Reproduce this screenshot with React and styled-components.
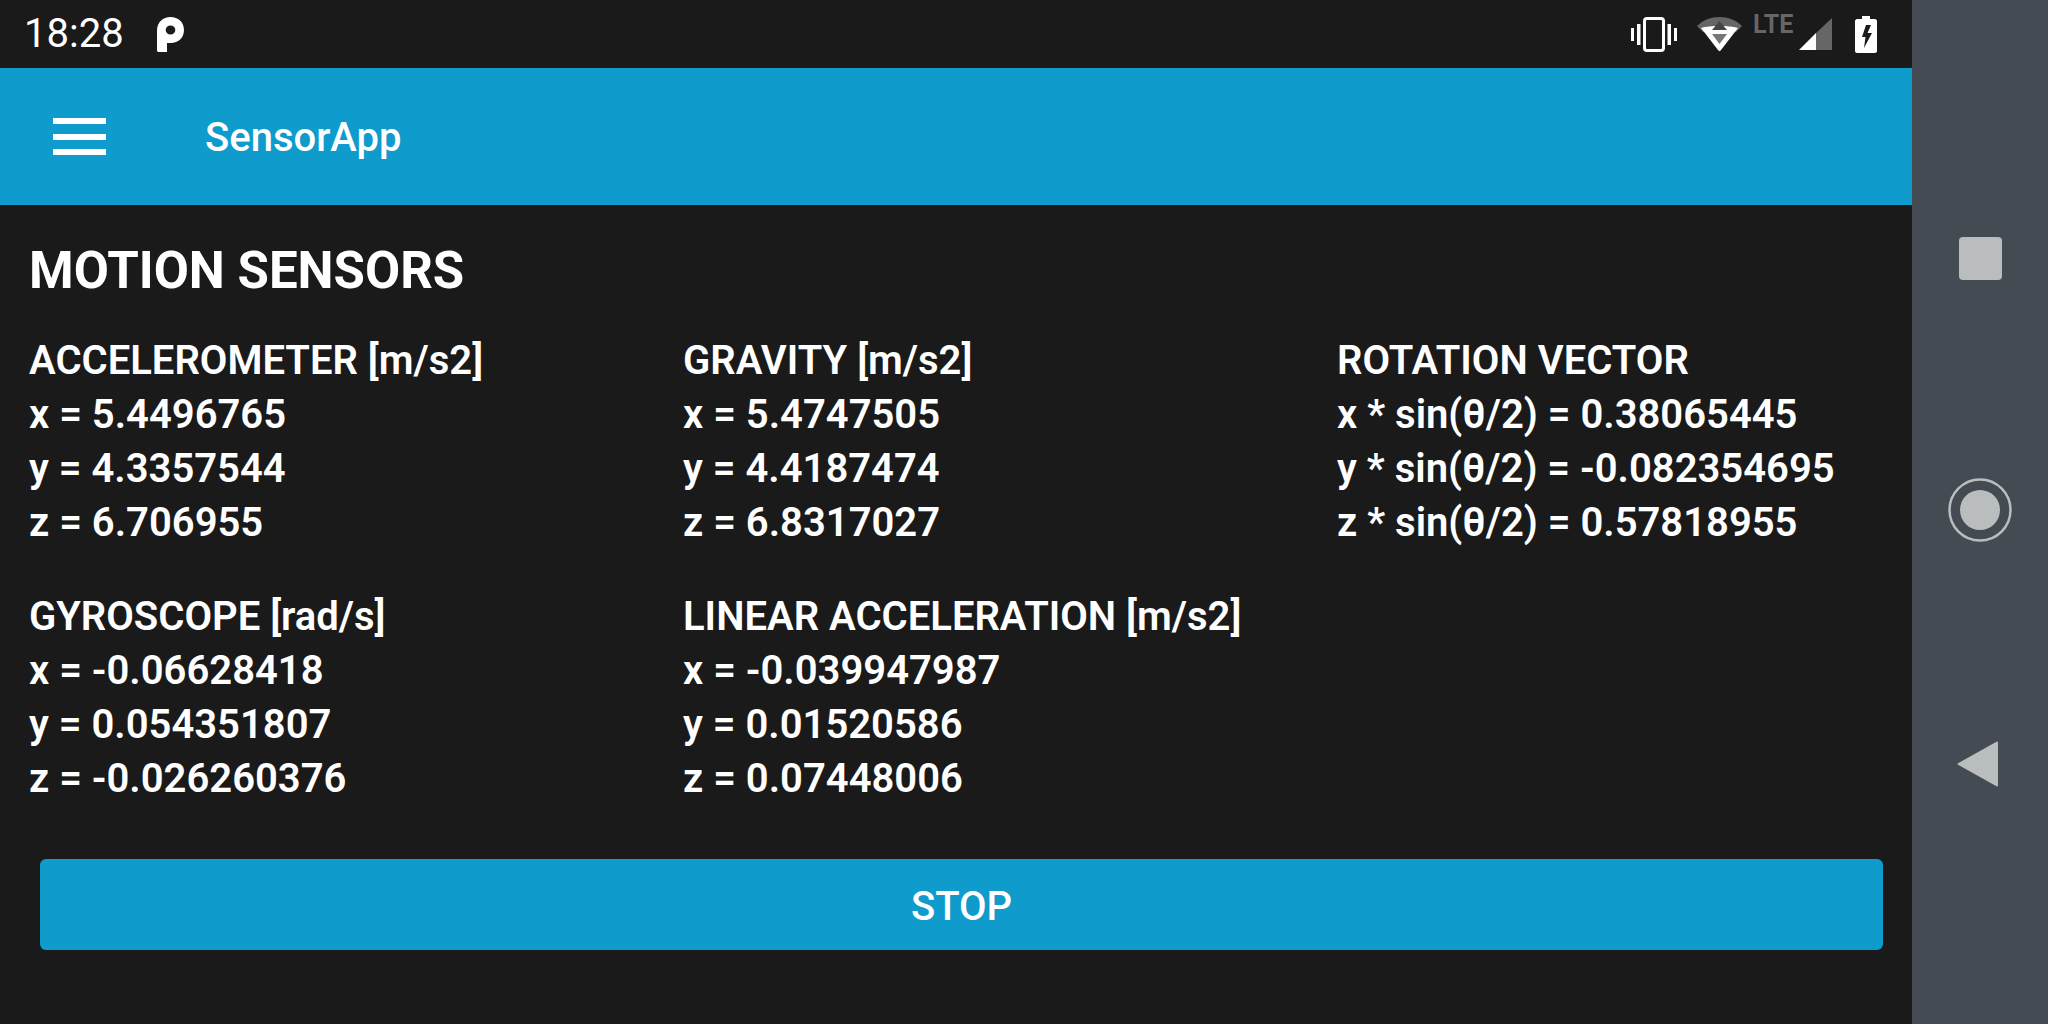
import React from "react";
import styled, { createGlobalStyle } from "styled-components";

const Global = createGlobalStyle`
  html, body { margin: 0; padding: 0; background: #1a1a1a; }
  * { box-sizing: border-box; }
`;

const Screen = styled.div`
  display: flex;
  width: 2048px;
  height: 1024px;
  overflow: hidden;
  font-family: Roboto, "Liberation Sans", sans-serif;
  color: #fff;
`;
const Main = styled.div`
  width: 1912px;
  display: flex;
  flex-direction: column;
  background: #1a1a1a;
`;
const StatusBar = styled.div`
  height: 68px;
  display: flex;
  align-items: center;
  justify-content: space-between;
  padding: 0 35px 0 24px;
`;
const StatusLeft = styled.div`
  display: flex;
  align-items: center;
  gap: 33px;
`;
const Time = styled.span`
  font-size: 40px;
  font-weight: 400;
  line-height: 70px;
`;
const StatusRight = styled.div`
  display: flex;
  align-items: center;
`;
const Lte = styled.span`
  font-size: 25px;
  font-weight: 700;
  color: #666;
  line-height: 20px;
  width: 46px;
  margin-left: 11px;
  margin-top: -18px;
`;
const AppBar = styled.header`
  height: 137px;
  background: #0f9bcb;
  display: flex;
  align-items: center;
  padding-left: 53px;
  gap: 99px;
`;
const Hamburger = styled.div`
  width: 53px;
  height: 37px;
  display: flex;
  flex-direction: column;
  justify-content: space-between;
  span { display: block; height: 6px; background: #fff; }
`;
const AppTitle = styled.h1`
  margin: 2px 0 0;
  font-size: 40px;
  font-weight: 500;
  line-height: 48px;
`;
const Content = styled.main`
  flex: 1;
  padding: 37px 29px 0;
`;
const Title = styled.h2`
  margin: 0 0 34px;
  font-size: 51px;
  font-weight: 700;
  line-height: 58px;
`;
const SensorGrid = styled.div`
  display: grid;
  grid-template-columns: repeat(3, 654px);
  row-gap: 40px;
`;
const Sensor = styled.div`
  font-size: 40px;
  font-weight: 600;
  line-height: 54px;
  white-space: nowrap;
`;
const Line = styled.div``;
const Stop = styled.button`
  display: block;
  width: 1843px;
  height: 91px;
  margin: 53px 0 0 11px;
  padding: 3px 0 0;
  border: 0;
  border-radius: 6px;
  background: #0f9bcb;
  color: #fff;
  font-family: inherit;
  font-size: 40px;
  font-weight: 500;
`;
const NavBar = styled.nav`
  width: 136px;
  background: #444b52;
  display: flex;
  flex-direction: column;
  align-items: center;
  padding: 237px 0 0 0;
`;
const NavSlot = styled.div`
  height: ${(p) => p.$h}px;
  display: flex;
  align-items: flex-start;
  justify-content: center;
  margin-left: ${(p) => p.$shift || 0}px;
`;

const sensors = [
  ["ACCELEROMETER [m/s2]", "x = 5.4496765", "y = 4.3357544", "z = 6.706955"],
  ["GRAVITY [m/s2]", "x = 5.4747505", "y = 4.4187474", "z = 6.8317027"],
  ["ROTATION VECTOR", "x * sin(θ/2) = 0.38065445", "y * sin(θ/2) = -0.082354695", "z * sin(θ/2) = 0.57818955"],
  ["GYROSCOPE [rad/s]", "x = -0.06628418", "y = 0.054351807", "z = -0.026260376"],
  ["LINEAR ACCELERATION [m/s2]", "x = -0.039947987", "y = 0.01520586", "z = 0.07448006"],
];

const PIcon = () => (
  <svg width="27" height="35" viewBox="0 0 27 35">
    <path fillRule="evenodd" fill="#fff" d="M0 14C0 5 6 0 13.5 0S27 5 27 13 21 26 14 26H10V35H1L0 34ZM13.5 8.5A4.8 4.5 0 1 0 13.5 17.5 4.8 4.5 0 1 0 13.5 8.5Z" />
  </svg>
);
const VibrateIcon = () => (
  <svg width="46" height="35" viewBox="0 0 46 35" style={{ marginRight: 20 }}>
    <rect x="13.5" y="1.5" width="19" height="32" rx="2.5" fill="none" stroke="#fff" strokeWidth="3" />
    <rect x="0" y="11" width="3" height="13" fill="#fff" />
    <rect x="6" y="7" width="3.5" height="21" fill="#fff" />
    <rect x="36.5" y="7" width="3.5" height="21" fill="#fff" />
    <rect x="43" y="11" width="3" height="13" fill="#fff" />
  </svg>
);
const WifiIcon = () => (
  <svg width="45" height="35" viewBox="0 0 45 35">
    <path fill="#666" d="M0 9C6 3 14 0 22.500 0S39 3 45 9L39 15H6Z" />
    <path fill="#fff" d="M4 11C9 9.500 15 9 22.500 9S36 9.500 41 11L24 33C23 34.500 22 34.500 21 33Z" />
    <path fill="#444" d="M22.500 4L30 13H15Z" />
    <path fill="#777" d="M15 17H30L22.500 27Z" />
  </svg>
);
const SignalIcon = () => (
  <svg width="33" height="32" viewBox="0 0 33 32">
    <path fill="#666" d="M33 0V32H16V16Z" />
    <path fill="#fff" d="M17 15V32H0Z" />
  </svg>
);
const BatteryIcon = () => (
  <svg width="22" height="37" viewBox="0 0 22 37" style={{ marginLeft: 23 }}>
    <path fill="#fff" fillRule="evenodd" d="M7 0H15V3H20C21 3 22 4 22 5V35C22 36 21 37 20 37H2C1 37 0 36 0 35V5C0 4 1 3 2 3H7ZM11 9L7 21H10.500L9 32L17 17H12.500L16 9Z" />
  </svg>
);

export default function App() {
  return (
    <>
      <Global />
      <Screen>
        <Main>
          <StatusBar>
            <StatusLeft>
              <Time>18:28</Time>
              <PIcon />
            </StatusLeft>
            <StatusRight>
              <VibrateIcon />
              <WifiIcon />
              <Lte>LTE</Lte>
              <SignalIcon />
              <BatteryIcon />
            </StatusRight>
          </StatusBar>
          <AppBar>
            <Hamburger><span /><span /><span /></Hamburger>
            <AppTitle>SensorApp</AppTitle>
          </AppBar>
          <Content>
            <Title>MOTION SENSORS</Title>
            <SensorGrid>
              {sensors.map((s) => (
                <Sensor key={s[0]}>
                  {s.map((l) => <Line key={l}>{l}</Line>)}
                </Sensor>
              ))}
            </SensorGrid>
            <Stop>STOP</Stop>
          </Content>
        </Main>
        <NavBar>
          <NavSlot $h={241}>
            <svg width="43" height="43" viewBox="0 0 43 43"><rect width="43" height="43" rx="4" fill="#b9bdbd" /></svg>
          </NavSlot>
          <NavSlot $h={263}>
            <svg width="64" height="64" viewBox="0 0 64 64">
              <circle cx="32" cy="32" r="30.500" fill="none" stroke="#b9bdbd" strokeWidth="2.500" />
              <circle cx="32" cy="32" r="20" fill="#b9bdbd" />
            </svg>
          </NavSlot>
          <NavSlot $h={60} $shift={-5}>
            <svg width="42" height="46" viewBox="0 0 42 46">
              <path fill="#b9bdbd" stroke="#b9bdbd" strokeWidth="2" strokeLinejoin="round" d="M1.500 23L40 1.500V44.500Z" />
            </svg>
          </NavSlot>
        </NavBar>
      </Screen>
    </>
  );
}
